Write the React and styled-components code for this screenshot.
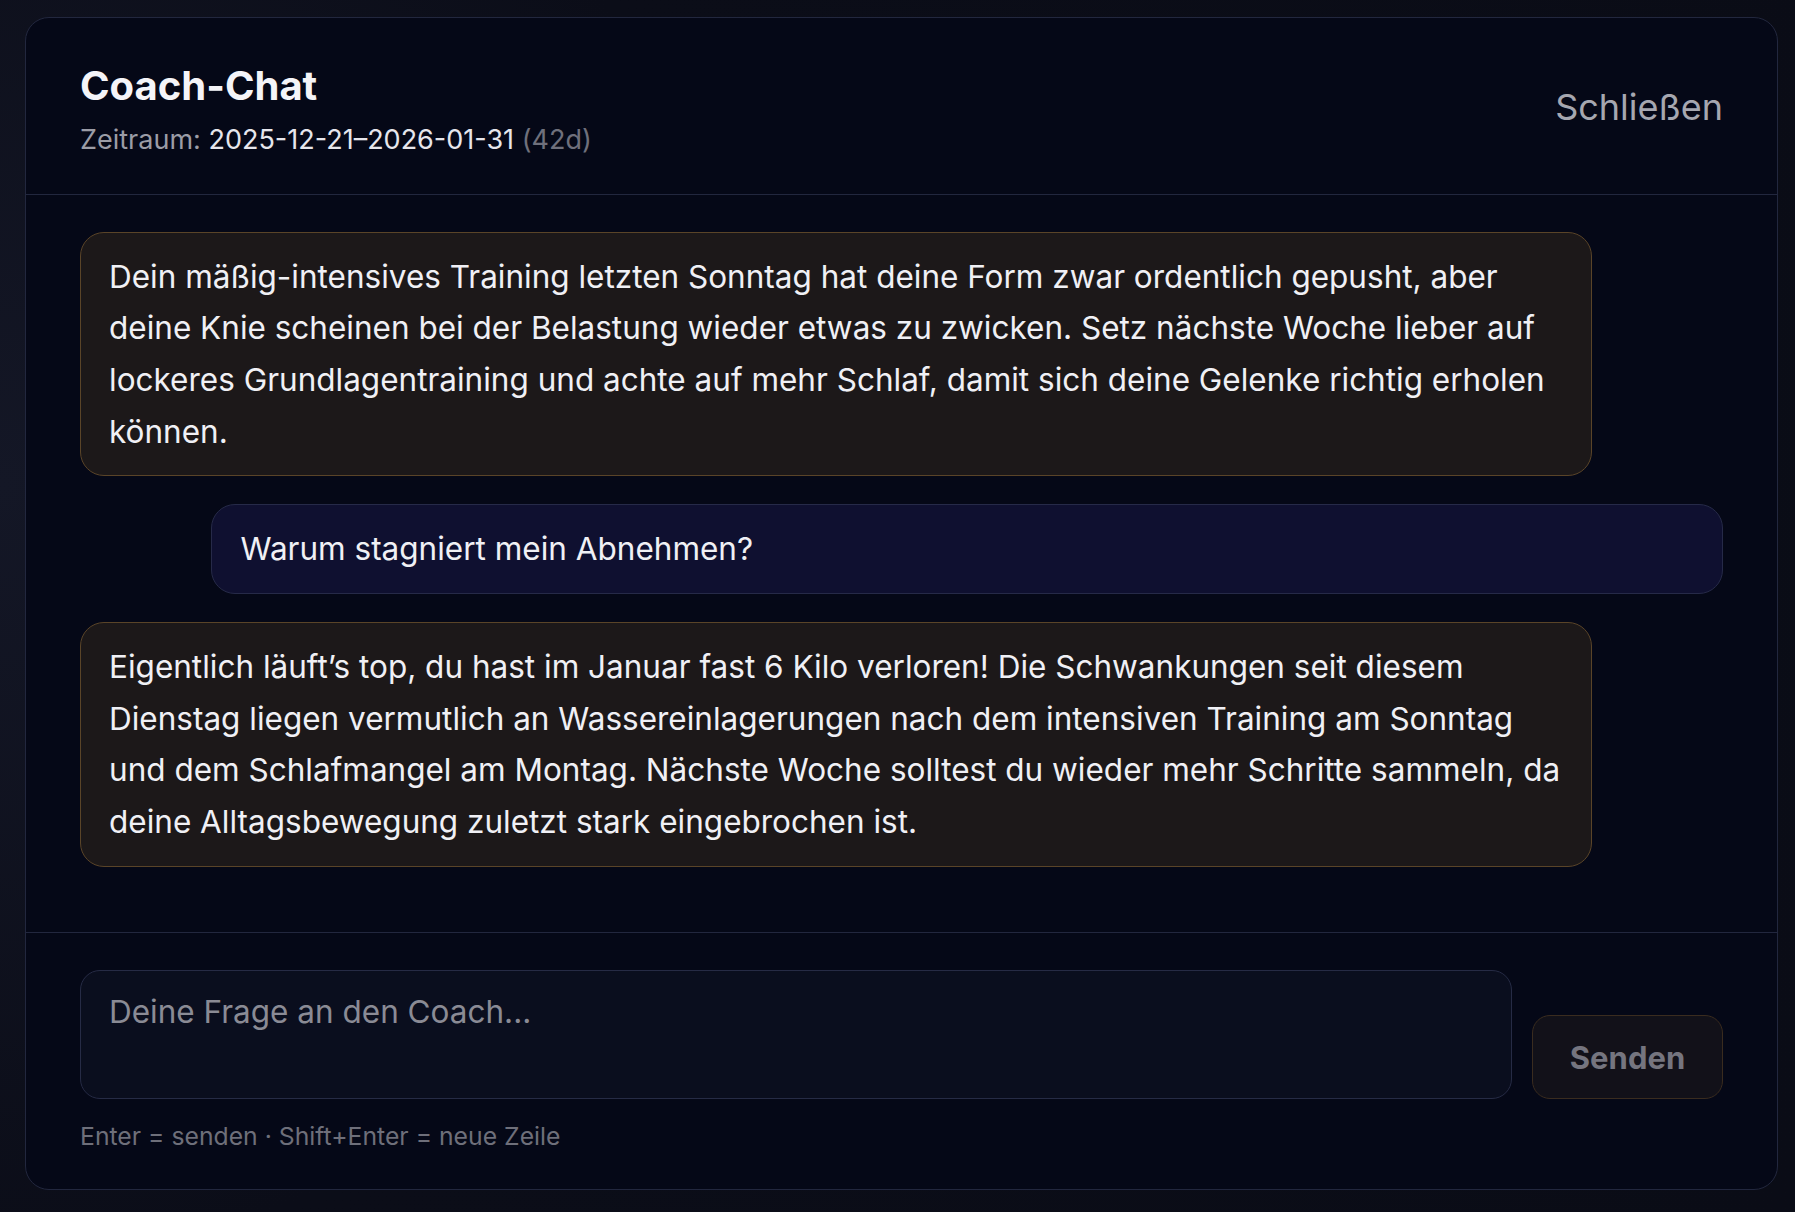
import React from 'react';
import styled, { createGlobalStyle } from 'styled-components';

const GlobalStyle = createGlobalStyle`
  html, body {
    margin: 0;
    padding: 0;
    background: #0c0e19;
    font-family: 'Inter', 'Noto Sans', sans-serif;
    color: #f0f0f5;
  }
  * {
    box-sizing: border-box;
  }
`;

const Page = styled.div`
  height: 100vh;
  padding: 17px 17px 22px 25px;
  background: radial-gradient(circle at 0% 40%, #141726 0%, #0b0d18 40%, #0a0c16 100%);
`;

const Panel = styled.section`
  height: 100%;
  display: flex;
  flex-direction: column;
  background: #050817;
  border: 1px solid #22273e;
  border-radius: 24px;
  overflow: hidden;
`;

const Header = styled.header`
  display: flex;
  align-items: center;
  justify-content: space-between;
  padding: 44px 54px 35px;
  border-bottom: 1px solid #22273e;
`;

const Title = styled.h2`
  margin: 0;
  font-size: 40px;
  line-height: 1.2;
  font-weight: 700;
  color: #f4f4f8;
`;

const Subtitle = styled.div`
  margin-top: 11px;
  font-size: 27px;
  line-height: 1.4;
  color: #9b9ca6;
`;

const Value = styled.span`
  color: ${(p) => (p.muted ? '#6f707c' : '#e6e6ec')};
`;

const CloseButton = styled.button`
  background: none;
  border: none;
  padding: 4px 0;
  margin-bottom: 6px;
  font-family: inherit;
  font-size: 36px;
  color: #a6a7b0;
  cursor: pointer;
`;

const Messages = styled.div`
  flex: 1;
  display: flex;
  flex-direction: column;
  gap: 28px;
  padding: 37px 54px;
  border-bottom: 1px solid #22273e;
`;

const Bubble = styled.div`
  width: 92%;
  align-self: ${(p) => (p.user ? 'flex-end' : 'flex-start')};
  padding: 18px 28px;
  font-size: 31.5px;
  line-height: 1.64;
  color: #f0f0f5;
  background: ${(p) => (p.user ? '#0f1030' : '#1c1819')};
  border: 1px solid ${(p) => (p.user ? '#262a48' : '#5a4428')};
  border-radius: 24px;
`;

const Footer = styled.footer`
  padding: 37px 54px 35px;
`;

const InputRow = styled.div`
  display: flex;
  align-items: flex-end;
  gap: 20px;
`;

const TextArea = styled.textarea`
  flex: 1;
  height: 129px;
  resize: none;
  padding: 17px 28px;
  font-family: inherit;
  font-size: 31.5px;
  line-height: 1.5;
  color: #f0f0f5;
  background: #0a0e1e;
  border: 1px solid #262b45;
  border-radius: 20px;
  outline: none;
  &::placeholder {
    color: #8a8b95;
  }
`;

const SendButton = styled.button`
  width: 191px;
  height: 84px;
  font-family: inherit;
  font-size: 31px;
  font-weight: 700;
  color: #75757f;
  background: #121119;
  border: 1px solid #3a2c1f;
  border-radius: 18px;
  cursor: not-allowed;
`;

const Hint = styled.div`
  margin-top: 20px;
  font-size: 24.75px;
  line-height: 1.4;
  color: #6e6f7a;
`;

const messages = [
  {
    role: 'assistant',
    text: 'Dein mäßig-intensives Training letzten Sonntag hat deine Form zwar ordentlich gepusht, aber deine Knie scheinen bei der Belastung wieder etwas zu zwicken. Setz nächste Woche lieber auf lockeres Grundlagentraining und achte auf mehr Schlaf, damit sich deine Gelenke richtig erholen können.',
  },
  { role: 'user', text: 'Warum stagniert mein Abnehmen?' },
  {
    role: 'assistant',
    text: 'Eigentlich läuft’s top, du hast im Januar fast 6 Kilo verloren! Die Schwankungen seit diesem Dienstag liegen vermutlich an Wassereinlagerungen nach dem intensiven Training am Sonntag und dem Schlafmangel am Montag. Nächste Woche solltest du wieder mehr Schritte sammeln, da deine Alltagsbewegung zuletzt stark eingebrochen ist.',
  },
];

export default function App() {
  return (
    <Page>
      <GlobalStyle />
      <Panel>
        <Header>
          <div>
            <Title>Coach-Chat</Title>
            <Subtitle>
              Zeitraum: <Value>2025-12-21–2026-01-31</Value> <Value muted>(42d)</Value>
            </Subtitle>
          </div>
          <CloseButton>Schließen</CloseButton>
        </Header>

        <Messages>
          {messages.map((m, i) => (
            <Bubble key={i} user={m.role === 'user'}>
              {m.text}
            </Bubble>
          ))}
        </Messages>

        <Footer>
          <InputRow>
            <TextArea placeholder="Deine Frage an den Coach..." />
            <SendButton disabled>Senden</SendButton>
          </InputRow>
          <Hint>Enter = senden · Shift+Enter = neue Zeile</Hint>
        </Footer>
      </Panel>
    </Page>
  );
}
